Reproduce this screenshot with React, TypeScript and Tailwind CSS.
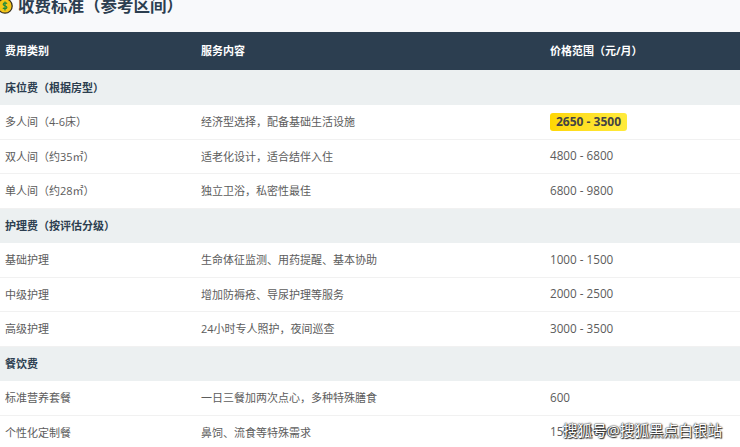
import React from 'react';

const font = '[font-family:"Open_Sans","Noto_Sans_CJK_SC",sans-serif]';

type Row = { section: string } | { name: string; desc: string; price: string; hot?: boolean };

const rows: Row[] = [
  { section: '床位费（根据房型）' },
  { name: '多人间（4-6床）', desc: '经济型选择，配备基础生活设施', price: '2650 - 3500', hot: true },
  { name: '双人间（约35㎡）', desc: '适老化设计，适合结伴入住', price: '4800 - 6800' },
  { name: '单人间（约28㎡）', desc: '独立卫浴，私密性最佳', price: '6800 - 9800' },
  { section: '护理费（按评估分级）' },
  { name: '基础护理', desc: '生命体征监测、用药提醒、基本协助', price: '1000 - 1500' },
  { name: '中级护理', desc: '增加防褥疮、导尿护理等服务', price: '2000 - 2500' },
  { name: '高级护理', desc: '24小时专人照护，夜间巡查', price: '3000 - 3500' },
  { section: '餐饮费' },
  { name: '标准营养套餐', desc: '一日三餐加两次点心，多种特殊膳食', price: '600' },
  { name: '个性化定制餐', desc: '鼻饲、流食等特殊需求', price: '1500 - 2000' },
];

function CoinIcon() {
  return (
    <svg width="16" height="16" viewBox="0 0 16 16" className="shrink-0">
      <circle cx="8" cy="8" r="7.2" fill="#f5c518" stroke="#3a3320" strokeWidth="1.3" />
      <path d="M10 5.6c-.5-.8-3.6-1.100-3.800.6-.2 1.900 3.800 1.200 3.700 3.200-.1 1.600-3.300 1.500-4 .5M8 3.500v9" fill="none" stroke="#1f8a3b" strokeWidth="1.200" />
    </svg>
  );
}

export default function App() {
  return (
    <div className={`relative w-[740px] h-[447px] overflow-hidden bg-white ${font}`}>
      <div className="h-8 bg-[#f8f9fb] overflow-hidden">
        <div className="flex items-center gap-[5px] -ml-[3px] -mt-[2px] h-4">
          <CoinIcon />
          <h2 className="text-[16.5px] leading-4 font-bold text-[#2c3e50] whitespace-nowrap">收费标准（参考区间）</h2>
        </div>
      </div>
      <table className="w-full table-fixed border-collapse text-[11px] text-[#5c5c5c]">
        <colgroup>
          <col className="w-[196px]" />
          <col className="w-[349px]" />
          <col />
        </colgroup>
        <thead>
          <tr className="h-[38px] bg-[#2c3e50] text-white">
            <th className="pl-[5px] pt-px text-left font-bold">费用类别</th>
            <th className="pl-[5px] pt-px text-left font-bold">服务内容</th>
            <th className="pl-[5px] pt-px text-left font-bold">价格范围（元/月）</th>
          </tr>
        </thead>
        <tbody>
          {rows.map((r, i) =>
            'section' in r ? (
              <tr key={i} className="h-[34.5px] bg-[#ecf0f1]">
                <td colSpan={3} className="pl-[5px] pt-px font-bold text-[#2c3e50]">{r.section}</td>
              </tr>
            ) : (
              <tr key={i} className="h-[34.5px] border-b border-[#f1f1f1]">
                <td className="pl-[5px] pt-px">{r.name}</td>
                <td className="pl-[5px] pt-px">{r.desc}</td>
                <td className="pl-[5px] text-[11.7px]">
                  {r.hot ? (
                    <span className="inline-block rounded-[3px] bg-gradient-to-r from-[#ffd700] to-[#ffeb3b] px-[6px] py-[2px] text-[12px] font-bold leading-[14px] text-[#444]">{r.price}</span>
                  ) : (
                    r.price
                  )}
                </td>
              </tr>
            ),
          )}
        </tbody>
      </table>
      <div className="absolute left-[563px] top-[420px] text-[14.6px] leading-[20px] text-white whitespace-nowrap [text-shadow:0_0_1.5px_#222,0_0_1.5px_#222,1px_1px_1px_#333]">
        搜狐号@搜狐黑点白银站
      </div>
    </div>
  );
}
